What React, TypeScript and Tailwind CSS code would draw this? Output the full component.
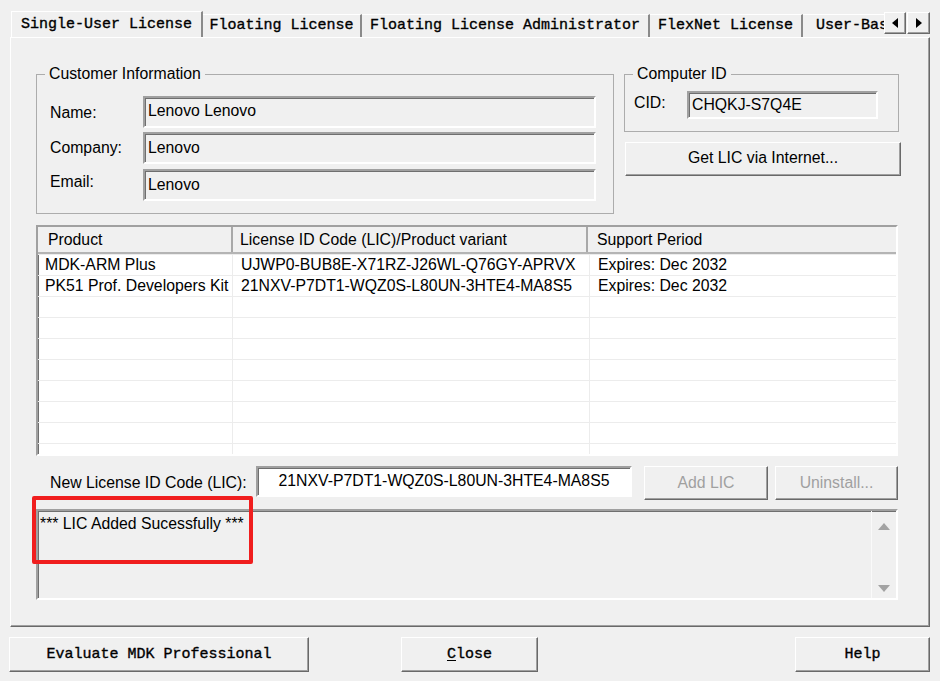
const raised =
  "border border-t-white border-l-white border-r-[#696969] border-b-[#696969] shadow-[inset_-1px_-1px_0_#a0a0a0]";
const sunken =
  "border-2 border-t-[#a0a0a0] border-l-[#a0a0a0] border-r-white border-b-white shadow-[inset_1px_1px_0_#6f6f6f]";
const sans = "font-['Liberation_Sans',Arial,sans-serif] text-[15.8px] leading-[18px]";
const mono =
  "font-['Liberation_Mono','Courier_New',monospace] text-[15px] leading-[18px] [-webkit-text-stroke:0.35px_#000]";

const tabs = [
  { label: "Floating License", w: "w-[159px]" },
  { label: "Floating License Administrator", w: "w-[288px]" },
  { label: "FlexNet License", w: "w-[153px]" },
  { label: "User-Based License", w: "w-[190px]" },
];

const licenses = [
  {
    product: "MDK-ARM Plus",
    lic: "UJWP0-BUB8E-X71RZ-J26WL-Q76GY-APRVX",
    support: "Expires: Dec 2032",
  },
  {
    product: "PK51 Prof. Developers Kit",
    lic: "21NXV-P7DT1-WQZ0S-L80UN-3HTE4-MA8S5",
    support: "Expires: Dec 2032",
  },
];

const Field = ({ value, className }: { value: string; className: string }) => (
  <div className={`${sunken} bg-[#f0f0f0] flex items-center pl-[3px] text-black ${className}`}>
    {value}
  </div>
);

const Triangle = ({ dir, color }: { dir: "up" | "down" | "left" | "right"; color: string }) => {
  const pts = {
    up: "0,7 6,0 12,7",
    down: "0,0 12,0 6,7",
    left: "6,0 6,10 0,5",
    right: "0,0 0,10 6,5",
  }[dir];
  const size = dir === "up" || dir === "down" ? { w: 12, h: 7 } : { w: 6, h: 10 };
  return (
    <svg width={size.w} height={size.h} viewBox={`0 0 ${size.w} ${size.h}`}>
      <polygon points={pts} fill={color} />
    </svg>
  );
};

const App = () => {
  const rows = Array.from({ length: 10 }, (_, i) => licenses[i]);

  return (
    <div className={`relative w-[940px] h-[681px] bg-[#f0f0f0] overflow-hidden text-black ${sans}`}>
      {/* tab strip */}
      <div className="flex h-[37px]">
        <div className="ml-[11px] w-[873px] overflow-hidden flex items-end">
          <div
            className={`${mono} shrink-0 w-[192px] h-[26px] flex items-center justify-center border-t border-l border-t-white border-l-white border-r-2 border-r-[#8a8a8a] bg-[#f0f0f0]`}
          >
            Single-User License
          </div>
          {tabs.map((t) => (
            <div
              key={t.label}
              className={`${mono} ${t.w} shrink-0 h-[23px] flex items-center justify-center border-t border-t-white border-r-2 border-r-[#8a8a8a] whitespace-nowrap`}
            >
              {t.label}
            </div>
          ))}
        </div>
        <div className="flex gap-px mt-[12px] h-[22px]">
          <div className={`${raised} w-[22px] h-[22px] flex items-center justify-center`}>
            <Triangle dir="left" color="#000" />
          </div>
          <div className={`${raised} w-[23px] h-[22px] flex items-center justify-center`}>
            <Triangle dir="right" color="#000" />
          </div>
        </div>
      </div>

      {/* tab panel */}
      <div className="mx-[10px] h-[590px] border border-t-white border-l-white border-r-[#696969] border-b-[#696969] shadow-[inset_-1px_-1px_0_#a0a0a0]">
        <div className="flex mt-[27px] ml-[25px]">
          <fieldset className="w-[578px] h-[149px] border border-[#acacac]">
            <legend className="ml-[8px] px-[4px]">Customer Information</legend>
            <div className="pt-[13px] pl-[13px] flex flex-col">
              <div className="flex items-center">
                <span className="w-[93px] mt-[2px]">Name:</span>
                <Field value="Lenovo Lenovo" className="w-[453px] h-[32px] pb-[3px]" />
              </div>
              <div className="flex items-center mt-[4px]">
                <span className="w-[93px]">Company:</span>
                <Field value="Lenovo" className="w-[453px] h-[32px] pb-[1px]" />
              </div>
              <div className="flex items-center mt-[5px]">
                <span className="w-[93px] -mt-[6px]">Email:</span>
                <Field value="Lenovo" className="w-[453px] h-[32px]" />
              </div>
            </div>
          </fieldset>

          <div className="ml-[10px] w-[277px]">
            <fieldset className="w-[275px] h-[67px] border border-[#acacac]">
              <legend className="ml-[8px] px-[4px]">Computer ID</legend>
              <div className="pt-[8px] pl-[9px] flex items-center">
                <span className="w-[53px] -mt-[5px]">CID:</span>
                <Field value="CHQKJ-S7Q4E" className="w-[191px] h-[28px] pl-[2px]" />
              </div>
            </fieldset>
            <button
              className={`${raised} ${sans} ml-px mt-[10px] w-[276px] h-[34px] flex items-center justify-center bg-[#f0f0f0] pb-[2px]`}
            >
              Get LIC via Internet...
            </button>
          </div>
        </div>

        {/* license table */}
        <div className={`${sunken} ml-[25px] mt-[11px] w-[862px] h-[231px] bg-white overflow-hidden`}>
          <div className="flex h-[27px] bg-[#f0f0f0] border-b-2 border-b-[#b4b4b4]">
            <div className="w-[195px] pl-[10px] flex items-center border-r-2 border-r-[#a8a8a8]">Product</div>
            <div className="w-[355px] pl-[7px] flex items-center border-r-2 border-r-[#a8a8a8]">
              License ID Code (LIC)/Product variant
            </div>
            <div className="flex-1 pl-[9px] flex items-center">Support Period</div>
          </div>
          {rows.map((r, i) => (
            <div key={i} className="flex h-[21px] border-t border-t-[#ececec]">
              <div className="w-[195px] pl-[7px] flex items-center border-r border-r-[#ececec] whitespace-nowrap">
                {r?.product}
              </div>
              <div className="w-[357px] pl-[8px] flex items-center border-r border-r-[#ececec] whitespace-nowrap">
                {r?.lic}
              </div>
              <div className="flex-1 pl-[8px] flex items-center">{r?.support}</div>
            </div>
          ))}
        </div>

        {/* new license row */}
        <div className="flex items-start ml-[39px] mt-[10px]">
          <span className="w-[206px] h-[31px] flex items-center pt-[3px]">New License ID Code (LIC):</span>
          <div className={`${sunken} w-[376px] h-[31px] bg-white flex items-center justify-center pb-[2px]`}>
            21NXV-P7DT1-WQZ0S-L80UN-3HTE4-MA8S5
          </div>
          <button
            disabled
            className={`${raised} ${sans} ml-[12px] w-[124px] h-[34px] flex items-center justify-center text-[#a0a0a0] bg-[#f0f0f0]`}
          >
            Add LIC
          </button>
          <button
            disabled
            className={`${raised} ${sans} ml-[7px] w-[123px] h-[34px] flex items-center justify-center text-[#a0a0a0] bg-[#f0f0f0]`}
          >
            Uninstall...
          </button>
        </div>

        {/* output */}
        <div className={`${sunken} ml-[25px] mt-[9px] w-[862px] h-[91px] bg-[#f0f0f0] flex`}>
          <div className="flex-1 pl-[2px] pt-[4px]">*** LIC Added Sucessfully ***</div>
          <div className="w-[25px] border-l border-l-[#fafafa] flex flex-col items-center justify-between pt-[12px] pb-[6px]">
            <Triangle dir="up" color="#a3a3a3" />
            <Triangle dir="down" color="#a3a3a3" />
          </div>
        </div>
      </div>

      {/* dialog buttons */}
      <div className="flex ml-[9px] mt-[10px]">
        <button className={`${raised} ${mono} w-[300px] h-[35px] bg-[#f0f0f0]`}>Evaluate MDK Professional</button>
        <button className={`${raised} ${mono} ml-[92px] w-[137px] h-[35px] bg-[#f0f0f0]`}>
          <span className="underline underline-offset-2">C</span>lose
        </button>
        <button className={`${raised} ${mono} ml-[257px] w-[135px] h-[35px] bg-[#f0f0f0]`}>Help</button>
      </div>

      {/* annotation */}
      <div className="absolute left-[32px] top-[496px] w-[221px] h-[68px] border-4 border-[#f01e1e] rounded-[2px]" />
    </div>
  );
};

export default App;
